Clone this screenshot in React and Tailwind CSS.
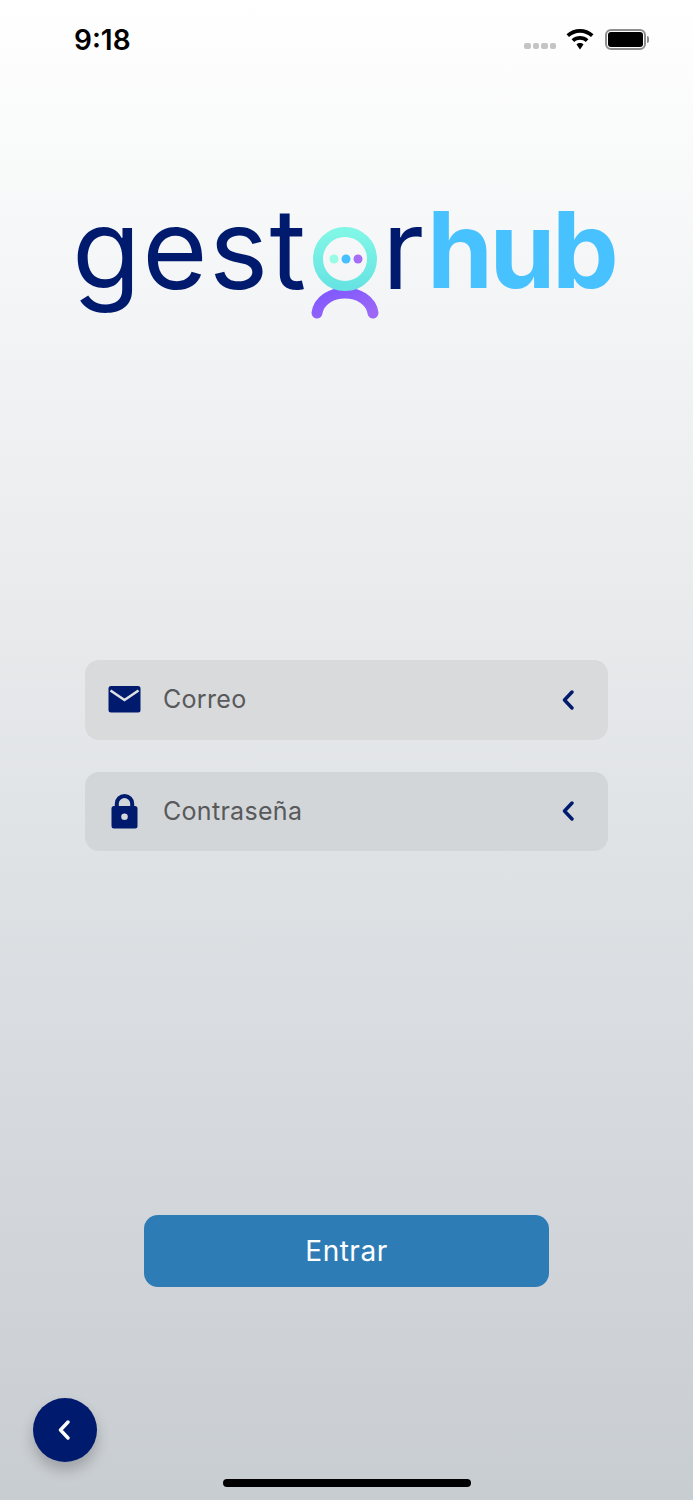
import React from 'react'

const navy = '#001a6e'

const Chevron = ({ className, color }) => (
  <svg className={className} viewBox="0 0 12 20" fill="none">
    <path d="M10 2 L2.5 10 L10 18" stroke={color} strokeWidth="3.4" strokeLinecap="round" strokeLinejoin="round" />
  </svg>
)

const MailIcon = () => (
  <svg className="w-[33px] h-[27px]" viewBox="0 0 33 27">
    <rect x="0.5" y="0" width="32" height="26.500" rx="2.5" fill={navy} />
    <path d="M2.500 4.500 L16.500 14 L30.500 4.500" fill="none" stroke="#dfe1e3" strokeWidth="2.6" />
  </svg>
)

const LockIcon = () => (
  <svg className="w-[33px] h-[35px]" viewBox="0 0 33 35">
    <path d="M8.800 14 V9.700 a7.700 7.700 0 0 1 15.400 0 V14" fill="none" stroke={navy} strokeWidth="4" />
    <rect x="3.5" y="12" width="26" height="22.5" rx="2.5" fill={navy} />
    <circle cx="16.5" cy="22.700" r="3.3" fill="#d5d8da" />
  </svg>
)

const Field = ({ icon, label, bg }) => (
  <div className={`flex items-center h-[79.5px] rounded-[14px] pl-[23px] pr-[34px] ${bg}`}>
    <div className="w-[33px] flex justify-center">{icon}</div>
    <span className="ml-[22px] flex-1 text-[25px] tracking-[0.3px] text-[#58595b] [font-family:Inter,sans-serif]">{label}</span>
    <Chevron className="w-[12px] h-[20px]" color={navy} />
  </div>
)

// the "o" of the logo: ring with chat dots and the arc below
const LogoFigure = () => (
  <svg className="w-[72px] h-[112px] shrink-0 mt-[18px]" viewBox="0 0 72 112">
    <defs>
      <linearGradient id="ring" x1="0" y1="0" x2="0" y2="1">
        <stop offset="0" stopColor="#80f6e6" />
        <stop offset="1" stopColor="#67e4e2" />
      </linearGradient>
      <linearGradient id="arc" x1="0" y1="0" x2="1" y2="1">
        <stop offset="0" stopColor="#7f58ff" />
        <stop offset="1" stopColor="#9d68f6" />
      </linearGradient>
    </defs>
    <path d="M7 103 C9 90 22 83 35 83 C48 83 61 90 63 103" fill="none" stroke="url(#arc)" strokeWidth="11" strokeLinecap="round" />
    <circle cx="35" cy="49" r="27" fill="none" stroke="url(#ring)" strokeWidth="10" />
    <circle cx="24" cy="49" r="4.5" fill="#98fbe4" />
    <circle cx="36" cy="49" r="4.5" fill="#45bfff" />
    <circle cx="48" cy="49" r="4.5" fill="#a56cf5" />
  </svg>
)

const Logo = () => (
  <div className="flex items-start ml-[72px] mt-[114px] h-[112px] [font-family:Inter,sans-serif]">
    <span className="w-[238px] text-[112px] leading-[112px] font-normal tracking-[1.5px] text-[#001a6e]">gest</span>
    <LogoFigure />
    <span className="w-[45px] text-[112px] leading-[112px] font-normal text-[#001a6e]">r</span>
    <span className="mt-[2px] text-[106px] leading-[112px] font-bold tracking-[-3.5px] text-[#48c2ff]">hub</span>
  </div>
)

const StatusBar = () => (
  <div className="flex items-center h-[78px] pl-[74px] pr-[44px]">
    <span className="flex-1 mt-[2px] text-[28px] font-semibold text-black [font-family:Inter,sans-serif]">9:18</span>
    <div className="flex gap-[2px] mr-[10px] mt-[14px]">
      <i className="block w-[6.5px] h-[6.5px] rounded-[2px] bg-[#c4c4c4]" />
      <i className="block w-[6.5px] h-[6.5px] rounded-[2px] bg-[#c4c4c4]" />
      <i className="block w-[6.5px] h-[6.5px] rounded-[2px] bg-[#c4c4c4]" />
      <i className="block w-[6.5px] h-[6.5px] rounded-[2px] bg-[#c4c4c4]" />
    </div>
    <svg className="w-[28px] h-[21px] mr-[11px]" viewBox="0 0 28 21">
      <path d="M14 0 C9 0 4.300 1.900 0.500 5.300 L3 8 C6 5.300 9.900 3.700 14 3.700 C18.100 3.700 22 5.300 25 8 L27.500 5.300 C23.700 1.900 19 0 14 0 Z" fill="#000" />
      <path d="M14 7 C11 7 8 8.100 5.600 10.300 L8.200 13 C9.800 11.500 11.800 10.700 14 10.700 C16.200 10.700 18.200 11.500 19.800 13 L22.400 10.300 C20 8.100 17 7 14 7 Z" fill="#000" />
      <path d="M14 14 C12.700 14 11.500 14.500 10.500 15.400 L14 20.500 L17.500 15.400 C16.500 14.500 15.300 14 14 14 Z" fill="#000" />
    </svg>
    <div className="flex items-center">
      <div className="w-[41px] h-[21px] rounded-[6px] border-2 border-[#8e8e8e] p-[1px]">
        <div className="w-full h-full rounded-[3px] bg-black" />
      </div>
      <div className="w-[2px] h-[7px] rounded-r-[2px] bg-[#8e8e8e] ml-[1px]" />
    </div>
  </div>
)

export default function App() {
  return (
    <div className="relative w-[693px] h-[1500px] overflow-hidden bg-gradient-to-b from-white to-[#c8cdd2]">
      <StatusBar />
      <Logo />

      <div className="flex flex-col gap-[32px] mx-[85px] mt-[356px]">
        <Field icon={<MailIcon />} label="Correo" bg="bg-[#d9dadc]" />
        <Field icon={<LockIcon />} label="Contraseña" bg="bg-[#d3d6d9]" />
      </div>

      <div className="flex justify-center mt-[364px]">
        <button className="w-[405px] h-[72px] rounded-[14px] bg-[#2e7cb6] text-white text-[28px] tracking-[0.5px] [font-family:Inter,sans-serif]">
          Entrar
        </button>
      </div>

      <button className="absolute left-[33px] top-[1398px] w-[64px] h-[64px] rounded-full bg-[#001a6e] flex items-center justify-center shadow-[0_8px_14px_rgba(0,0,0,0.22)]">
        <Chevron className="w-[12px] h-[20px] mr-[2px]" color="#fff" />
      </button>

      <div className="absolute left-[223px] top-[1479px] w-[248px] h-[8px] rounded-full bg-black" />
    </div>
  )
}
